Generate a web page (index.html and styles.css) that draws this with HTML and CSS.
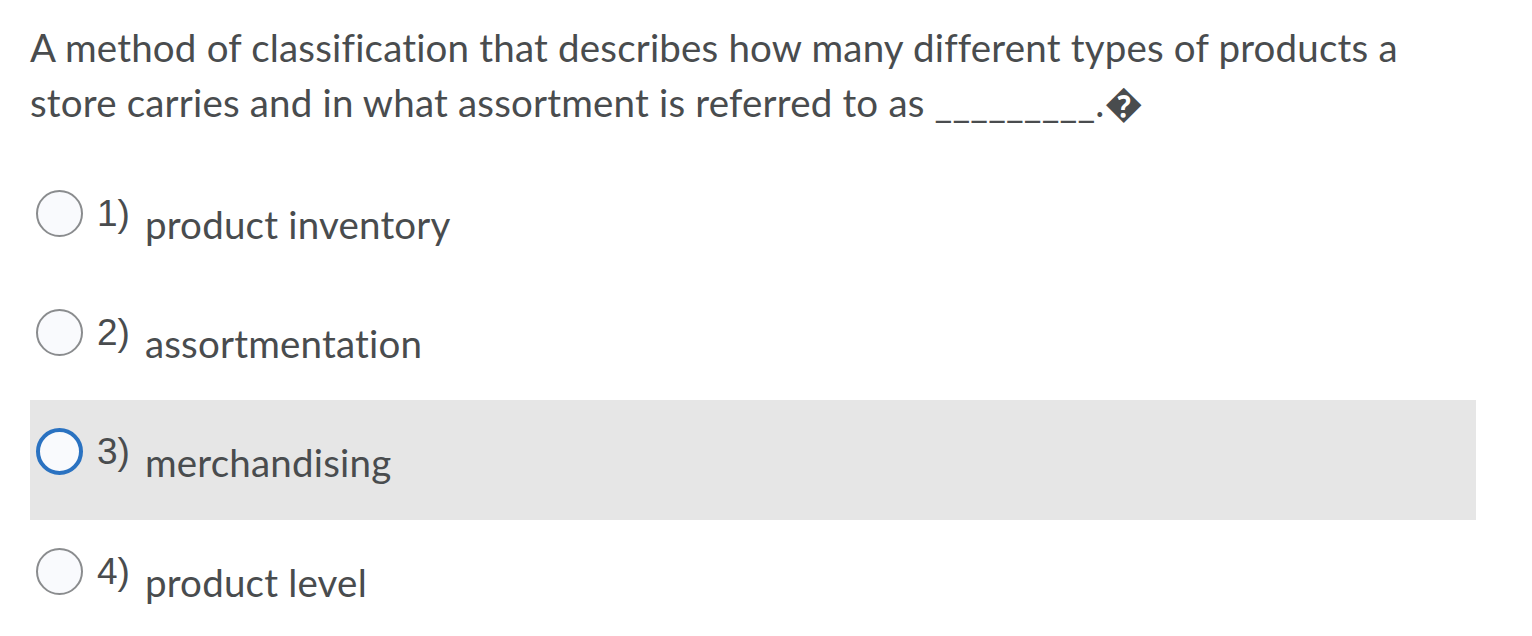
FILE: index.html
```html
<!DOCTYPE html>
<html>
<head>
<meta charset="utf-8">
<link rel="stylesheet" href="styles.css">
</head>
<body>
<div class="page">
  <p class="question">A method of classification that describes how many different types of products a store carries and in what assortment is referred to as _________.&#xFFFD;</p>
  <ul class="options">
    <li class="option"><span class="radio"></span><span class="num">1)</span><span class="label">product inventory</span></li>
    <li class="option"><span class="radio"></span><span class="num">2)</span><span class="label">assortmentation</span></li>
    <li class="option selected"><span class="radio"></span><span class="num">3)</span><span class="label">merchandising</span></li>
    <li class="option"><span class="radio"></span><span class="num">4)</span><span class="label">product level</span></li>
  </ul>
</div>
</body>
</html>
```

FILE: styles.css
```css
html, body {
  margin: 0;
  padding: 0;
  background: #ffffff;
}
.page {
  padding: 20px 0 0 30px;
  font-family: Lato, "Noto Sans", sans-serif;
  font-variant-ligatures: none;
  color: #494c4e;
}
.question {
  margin: 0;
  font-size: 38.5px;
  line-height: 55px;
  letter-spacing: 0.18px;
  width: 1420px;
}
.options {
  list-style: none;
  margin: 0;
  padding: 0;
  margin-top: 32px;
  width: 1446px;
}
.option {
  display: flex;
  align-items: flex-start;
  height: 119px;
  padding-top: 28px;
  box-sizing: border-box;
}
.option.selected {
  background: #e6e6e6;
  height: 120px;
}
.radio {
  width: 43px;
  height: 43px;
  border: 2px solid #8a8c8e;
  border-radius: 50%;
  background: #f9fafd;
  margin-left: 6px;
  flex: none;
}
.selected .radio {
  width: 39px;
  height: 39px;
  border: 4px solid #2a72c1;
}
.num {
  font-family: "Liberation Sans", Arial, sans-serif;
  font-size: 37px;
  line-height: 40px;
  margin-left: 14px;
  margin-top: 4px;
  color: #494c4e;
}
.label {
  font-size: 38.5px;
  line-height: 46px;
  margin-left: 15px;
  margin-top: 11px;
  letter-spacing: 0.2px;
}
```
